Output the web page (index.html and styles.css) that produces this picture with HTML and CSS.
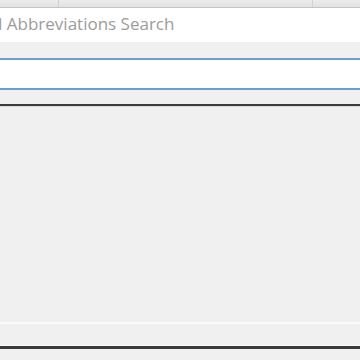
FILE: index.html
```html
<!DOCTYPE html>
<html>
<head>
<meta charset="utf-8">
<link rel="stylesheet" href="styles.css">
</head>
<body>
<div class="app">
  <div class="tabs">
    <div class="tab tab-a"></div>
    <div class="tab tab-b"></div>
    <div class="tab tab-c"></div>
  </div>
  <div class="title"><span class="title-text">d Abbreviations Search</span></div>
  <div class="gap"></div>
  <div class="search"></div>
  <div class="gap2"></div>
  <div class="list"></div>
  <div class="footer"></div>
</div>
</body>
</html>
```
FILE: styles.css
```css
html, body {
  margin: 0;
  padding: 0;
  background: #f0f0f0;
}
.app {
  width: 360px;
  height: 360px;
  display: flex;
  flex-direction: column;
  overflow: hidden;
  background: #f0f0f0;
}
.tabs {
  height: 7px;
  display: flex;
  background: linear-gradient(#ececec, #e2e2e2);
  border-bottom: 1px solid #c4c4c4;
  flex: none;
}
.tab {
  height: 100%;
  border-right: 1px solid #d2d2d2;
}
.tab-a { width: 58px; }
.tab-b { width: 253px; }
.tab-c { flex: 1; border-right: none; }
.title {
  height: 34px;
  background: #ffffff;
  flex: none;
  overflow: hidden;
  display: flex;
  align-items: center;
}
.title-text {
  font-family: "Open Sans", "Noto Sans", sans-serif;
  font-size: 17px;
  color: #9c9c9c;
  margin-left: -8px;
  margin-top: -3px;
  white-space: nowrap;
}
.gap {
  height: 16px;
  flex: none;
}
.search {
  height: 28px;
  background: #ffffff;
  border-top: 2px solid #6a9fd0;
  border-bottom: 2px solid #6a9fd0;
  flex: none;
}
.gap2 {
  height: 14px;
  flex: none;
}
.list {
  height: 216px;
  border-top: 2px solid #3c3c3c;
  border-bottom: 2px solid #fafafa;
  box-shadow: inset 0 1px 0 #dcdcdc;
  flex: none;
}
.footer {
  height: 21px;
  border-bottom: 1px solid #fbfbfb;
  box-shadow: 0 3px 0 #3a3a3a;
  flex: none;
}
```
